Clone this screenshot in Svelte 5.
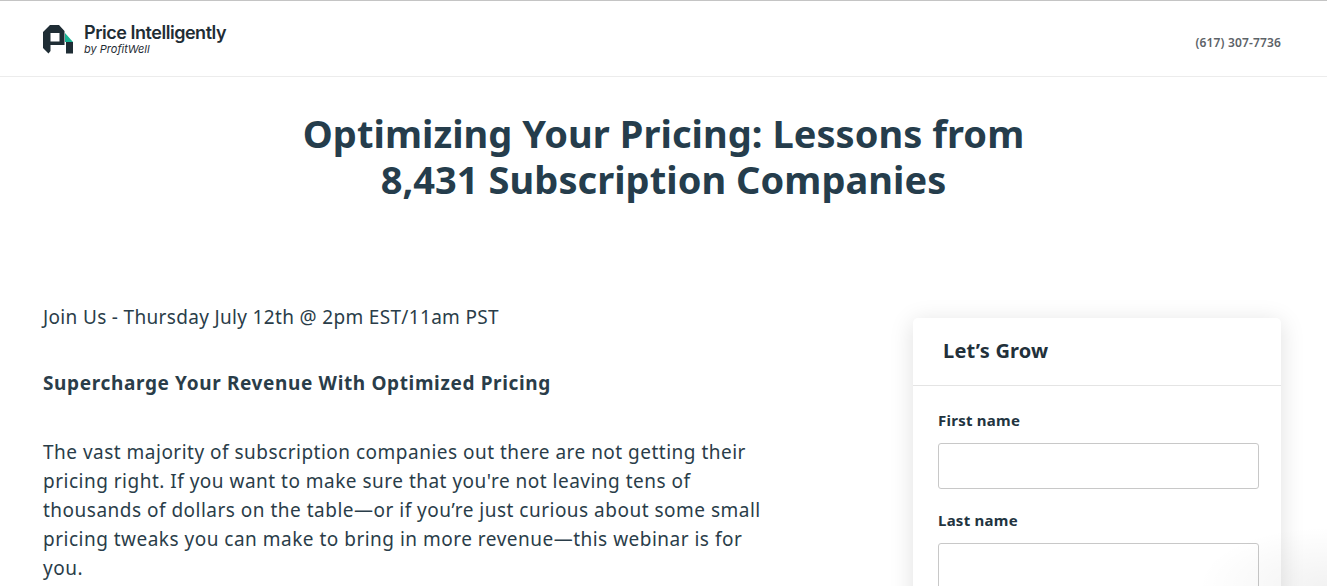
<script>
  const fields = ['First name', 'Last name'];
</script>

<div class="page">
  <header class="top">
    <div class="brand">
      <svg class="mark" viewBox="0 0 30 29" width="30" height="29" aria-hidden="true">
        <path fill="#1f2d35" fill-rule="evenodd" d="M7 0H16L21.500 6V20H7.500V26L5.500 28.500 0 23V7ZM7.500 8V16.500H16.500V8Z"/>
        <path fill="#19b394" d="M22 8 30 17H22Z"/>
        <rect fill="#1f2d35" x="23" y="17" width="7" height="11.500"/>
      </svg>
      <div class="names">
        <span class="name">Price Intelligently</span>
        <span class="by">by ProfitWell</span>
      </div>
    </div>
    <span class="phone">(617) 307-7736</span>
  </header>

  <h1>Optimizing Your Pricing: Lessons from<br />8,431 Subscription Companies</h1>

  <main class="content">
    <section class="copy">
      <p class="when">Join Us - Thursday July 12th @ 2pm EST/11am PST</p>
      <h2>Supercharge Your Revenue With Optimized Pricing</h2>
      <p class="lead">The vast majority of subscription companies out there are not getting their pricing right. If you want to make sure that you're not leaving tens of thousands of dollars on the table—or if you’re just curious about some small pricing tweaks you can make to bring in more revenue—this webinar is for you.</p>
    </section>
    <aside class="card">
      <h3>Let’s Grow</h3>
      <form class="form">
        {#each fields as f}
          <label class="field">
            <span>{f}</span>
            <input type="text" />
          </label>
        {/each}
      </form>
    </aside>
  </main>
  <div class="glow"></div>
</div>

<style>
  :global(body) {
    margin: 0;
    background: #fff;
    overflow: hidden;
  }
  .page {
    position: relative;
    height: 586px;
    overflow: hidden;
    font-family: "Noto Sans", "Open Sans", sans-serif;
    color: #2a3d49;
    border-top: 1px solid #c4c4c4;
    box-sizing: border-box;
  }
  .glow {
    position: absolute;
    right: 0;
    bottom: 0;
    width: 130px;
    height: 60px;
    background: radial-gradient(ellipse at 100% 100%, rgba(0, 0, 0, 0.05), rgba(0, 0, 0, 0) 70%);
    pointer-events: none;
  }
  .top {
    height: 75px;
    border-bottom: 1px solid #ececec;
    display: flex;
    justify-content: space-between;
    padding: 0 46px 0 43px;
  }
  .brand {
    display: flex;
    align-items: flex-start;
    gap: 11px;
    padding-top: 24px;
  }
  .mark { display: block; }
  .names {
    display: flex;
    flex-direction: column;
    margin-top: -1px;
    font-family: Inter, sans-serif;
    color: #1f2d35;
  }
  .name {
    font-size: 18px;
    font-weight: 600;
    letter-spacing: -0.47px;
    line-height: 17px;
  }
  .by {
    margin-top: 1px;
    font-size: 11px;
    font-style: italic;
    line-height: 15px;
  }
  .phone {
    align-self: flex-start;
    margin-top: 33px;
    font-size: 12px;
    font-weight: 600;
    letter-spacing: 0.15px;
    line-height: 18px;
    color: #5d6368;
  }
  h1 {
    margin: 33px 0 0;
    text-align: center;
    font-size: 38px;
    font-weight: 700;
    line-height: 46px;
    color: #253d4c;
    letter-spacing: 0.05px;
  }
  .content {
    display: flex;
    justify-content: space-between;
    align-items: flex-start;
    padding: 101px 46px 0 43px;
  }
  .copy {
    width: 720px;
    font-size: 19px;
    line-height: 29px;
    letter-spacing: 0.33px;
  }
  .copy p { margin: 0; }
  h2 {
    margin: 37px 0 0;
    font-size: 19px;
    line-height: 29px;
    font-weight: 700;
    letter-spacing: 0.64px;
  }
  .copy .lead {
    margin-top: 40px;
    letter-spacing: 0.49px;
  }
  .card {
    width: 368px;
    margin-top: 15px;
    padding-bottom: 30px;
    background: #fff;
    border-radius: 5px;
    box-shadow: 0 4px 24px rgba(0, 0, 0, 0.13);
  }
  h3 {
    margin: 0;
    padding: 19px 30px 20px;
    height: 28px;
    font-size: 20px;
    line-height: 28px;
    font-weight: 700;
    letter-spacing: 0.2px;
    color: #22303a;
    border-bottom: 1px solid #e4e4e4;
  }
  .form {
    padding: 22px 22px 0 25px;
    display: flex;
    flex-direction: column;
    gap: 19px;
  }
  .field { display: block; }
  .field span {
    display: block;
    font-size: 15px;
    font-weight: 700;
    letter-spacing: 0.25px;
    line-height: 24px;
    margin-bottom: 11px;
    color: #22343f;
  }
  input {
    display: block;
    width: 100%;
    height: 46px;
    box-sizing: border-box;
    border: 1px solid #c8c8c8;
    border-radius: 3px;
    background: #fff;
  }
</style>
